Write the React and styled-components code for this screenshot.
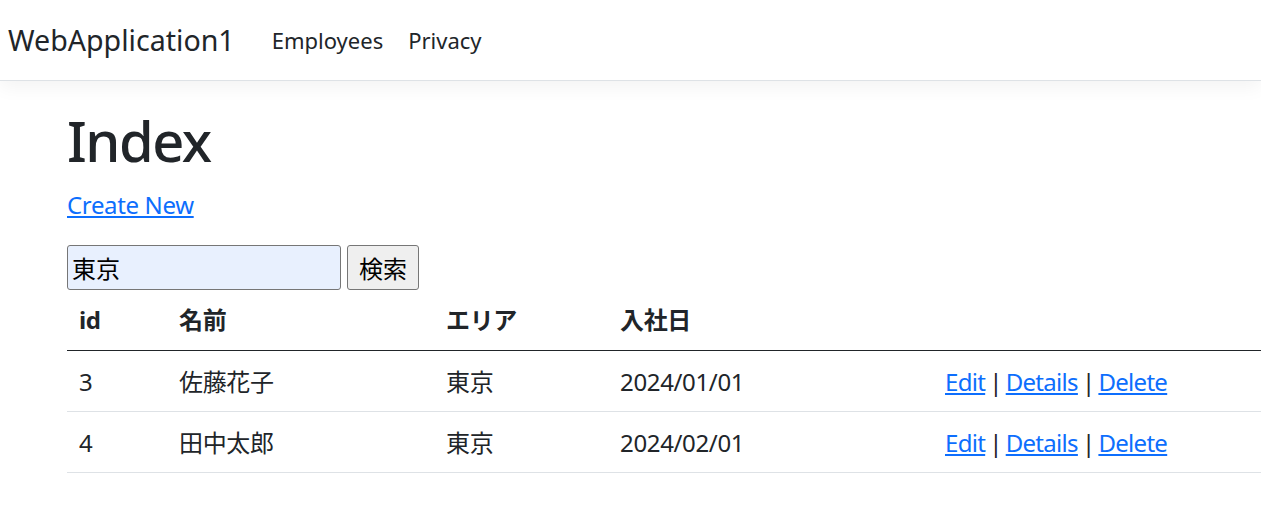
import React from "react";
import styled, { createGlobalStyle } from "styled-components";

const Global = createGlobalStyle`
  html, body { margin: 0; padding: 0; background: #fff; }
  body {
    font-family: "Noto Sans", "Noto Sans CJK JP", sans-serif;
    color: #212529;
    font-size: 24px;
    line-height: 1.5;
    letter-spacing: -0.35px;
    overflow-x: hidden;
  }
`;

const NavBar = styled.header`
  height: 80px;
  border-bottom: 1px solid #dee2e6;
  box-shadow: 0 6px 18px rgba(0, 0, 0, 0.05);
  display: flex;
  align-items: center;
  padding: 0 8px;
  letter-spacing: 0;
`;

const Brand = styled.a`
  font-size: 28.6px;
  color: #212529;
  text-decoration: none;
  margin-right: 37px;
  white-space: nowrap;
`;

const NavLinks = styled.nav`
  display: flex;
  gap: 25px;
`;

const NavLink = styled.a`
  font-size: 22px;
  color: #212529;
  text-decoration: none;
`;

const Main = styled.main`
  padding: 24px 0 0 67px;
`;

const Title = styled.h1`
  margin: 0 0 12px;
  font-size: 56px;
  font-weight: 500;
  line-height: 1.25;
  letter-spacing: -1.5px;
`;

const Para = styled.p`
  margin: 0 0 22px;
`;

const Link = styled.a`
  color: #0d6efd;
  text-decoration: underline;
  cursor: pointer;
`;

const SearchForm = styled.form`
  display: flex;
  gap: 6px;
`;

const SearchInput = styled.input`
  box-sizing: border-box;
  width: 274px;
  height: 45px;
  border: 1px solid #767676;
  border-radius: 3px;
  background: #e8f0fe;
  padding: 0 4px;
  font: inherit;
  font-family: "Noto Sans CJK JP", sans-serif;
  letter-spacing: 0;
  color: #000;
`;

const SearchButton = styled.button`
  box-sizing: border-box;
  width: 72px;
  height: 45px;
  border: 1px solid #767676;
  border-radius: 3px;
  background: #efefef;
  font: inherit;
  font-family: "Noto Sans CJK JP", sans-serif;
  letter-spacing: 0;
  color: #000;
  padding: 0;
`;

const Table = styled.table`
  width: 1194px;
  border-collapse: collapse;
  table-layout: fixed;
`;

const HeadCell = styled.th`
  text-align: left;
  font-weight: 700;
  padding: 0 12px;
  height: 60px;
  vertical-align: middle;
  border-bottom: 1px solid #212529;
  width: ${(p) => p.$w || "auto"};
`;

const Cell = styled.td`
  padding: 2px 12px 0;
  height: 58px;
  vertical-align: middle;
  border-bottom: 1px solid #dee2e6;
  white-space: nowrap;
`;

const ActionCell = styled(Cell)`
  letter-spacing: -0.7px;
`;

const Sep = styled.span`
  margin: 0 4px;
`;

const rows = [
  { id: 3, name: "佐藤花子", area: "東京", date: "2024/01/01" },
  { id: 4, name: "田中太郎", area: "東京", date: "2024/02/01" },
];

export default function App() {
  return (
    <>
      <Global />
      <NavBar>
        <Brand>WebApplication1</Brand>
        <NavLinks>
          <NavLink>Employees</NavLink>
          <NavLink>Privacy</NavLink>
        </NavLinks>
      </NavBar>
      <Main>
        <Title>Index</Title>
        <Para>
          <Link>Create New</Link>
        </Para>
        <SearchForm onSubmit={(e) => e.preventDefault()}>
          <SearchInput defaultValue="東京" />
          <SearchButton type="submit">検索</SearchButton>
        </SearchForm>
        <Table>
          <thead>
            <tr>
              <HeadCell $w="76px">id</HeadCell>
              <HeadCell $w="243px">名前</HeadCell>
              <HeadCell $w="150px">エリア</HeadCell>
              <HeadCell $w="301px">入社日</HeadCell>
              <HeadCell></HeadCell>
            </tr>
          </thead>
          <tbody>
            {rows.map((r) => (
              <tr key={r.id}>
                <Cell>{r.id}</Cell>
                <Cell>{r.name}</Cell>
                <Cell>{r.area}</Cell>
                <Cell>{r.date}</Cell>
                <ActionCell>
                  <Link>Edit</Link>
                  <Sep>|</Sep>
                  <Link>Details</Link>
                  <Sep>|</Sep>
                  <Link>Delete</Link>
                </ActionCell>
              </tr>
            ))}
          </tbody>
        </Table>
      </Main>
    </>
  );
}
